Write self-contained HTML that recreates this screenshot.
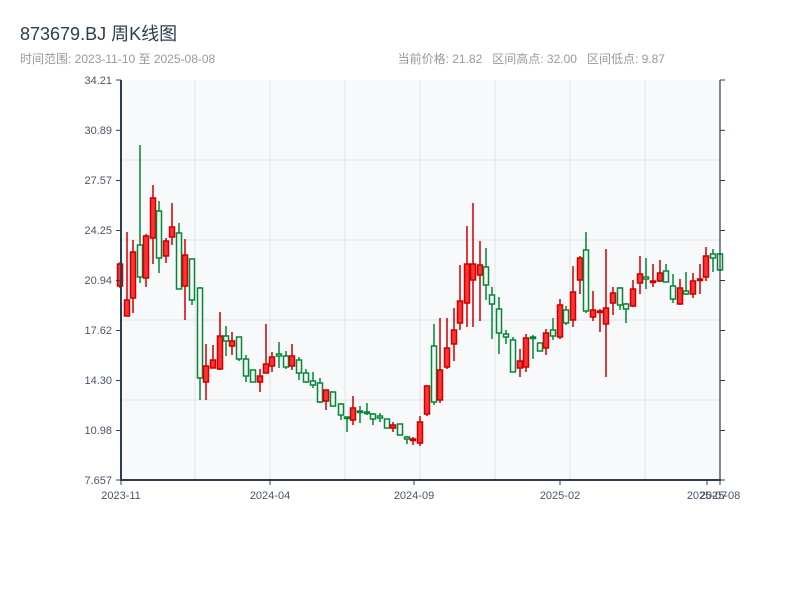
<!DOCTYPE html>
<html><head><meta charset="utf-8"><style>
html,body{margin:0;padding:0;background:#fff;width:800px;height:600px;overflow:hidden}
svg{display:block}
text{font-family:"Liberation Sans","Noto Sans CJK SC",sans-serif}
</style></head><body>
<svg width="800" height="600" viewBox="0 0 800 600" xmlns="http://www.w3.org/2000/svg">
<text x="20" y="40" font-size="18" fill="#2c3e50">873679.BJ 周K线图</text>
<text x="20" y="63" font-size="12" fill="#999">时间范围: 2023-11-10 至 2025-08-08</text>
<text x="665" y="63" font-size="12" fill="#999" text-anchor="end" style="white-space:pre">当前价格: 21.82   区间高点: 32.00   区间低点: 9.87</text>
<rect x="121" y="80" width="599" height="400" fill="#f7f9fb"/>
<g stroke="#e1e4ea" stroke-width="1">
<line x1="195" y1="80" x2="195" y2="480"/><line x1="270" y1="80" x2="270" y2="480"/><line x1="345" y1="80" x2="345" y2="480"/><line x1="420" y1="80" x2="420" y2="480"/><line x1="495" y1="80" x2="495" y2="480"/><line x1="570" y1="80" x2="570" y2="480"/><line x1="645" y1="80" x2="645" y2="480"/>
<line x1="121" y1="160" x2="720" y2="160"/><line x1="121" y1="240" x2="720" y2="240"/><line x1="121" y1="320" x2="720" y2="320"/><line x1="121" y1="400" x2="720" y2="400"/>
</g>
<g id="c" stroke-width="1.5"></g>
<g stroke="#2c3e50">
<line x1="121" y1="80" x2="121" y2="481" stroke-width="2"/>
<line x1="120" y1="480" x2="721" y2="480" stroke-width="2"/>
<line x1="720" y1="80" x2="720" y2="480" stroke-width="1.2"/>
<g stroke-width="1">
<line x1="116" y1="80" x2="121" y2="80"/><line x1="116" y1="130.3" x2="121" y2="130.3"/><line x1="116" y1="180.5" x2="121" y2="180.5"/><line x1="116" y1="230.5" x2="121" y2="230.5"/><line x1="116" y1="280.5" x2="121" y2="280.5"/><line x1="116" y1="330.5" x2="121" y2="330.5"/><line x1="116" y1="380.5" x2="121" y2="380.5"/><line x1="116" y1="430.5" x2="121" y2="430.5"/><line x1="116" y1="480" x2="121" y2="480"/>
<line x1="720" y1="80" x2="725" y2="80"/><line x1="720" y1="130.3" x2="725" y2="130.3"/><line x1="720" y1="180.5" x2="725" y2="180.5"/><line x1="720" y1="230.5" x2="725" y2="230.5"/><line x1="720" y1="280.5" x2="725" y2="280.5"/><line x1="720" y1="330.5" x2="725" y2="330.5"/><line x1="720" y1="380.5" x2="725" y2="380.5"/><line x1="720" y1="430.5" x2="725" y2="430.5"/><line x1="720" y1="480" x2="725" y2="480"/>
<line x1="121" y1="480" x2="121" y2="485"/><line x1="270" y1="480" x2="270" y2="485"/><line x1="414" y1="480" x2="414" y2="485"/><line x1="560" y1="480" x2="560" y2="485"/><line x1="707" y1="480" x2="707" y2="485"/><line x1="720" y1="480" x2="720" y2="485"/>
</g></g>
<g font-size="11" fill="#4a5568" text-anchor="end">
<text x="112" y="84">34.21</text><text x="112" y="134">30.89</text><text x="112" y="184">27.57</text><text x="112" y="234">24.25</text><text x="112" y="284">20.94</text><text x="112" y="334">17.62</text><text x="112" y="384">14.30</text><text x="112" y="434">10.98</text><text x="112" y="484">7.657</text>
</g>
<g font-size="11" fill="#4a5568" text-anchor="middle">
<text x="121" y="499">2023-11</text><text x="270" y="499">2024-04</text><text x="414" y="499">2024-09</text><text x="560" y="499">2025-02</text><text x="707" y="499">2025-07</text><text x="720" y="499">2025-08</text>
</g>
</svg>
<script>
var d=[[120,1,262,288,264,286],[127,1,232,316,300,316],[133,1,240,313,252,298],[140,0,145,283,245,277],[146,1,234,287,236,278],[153,1,185,264,198,238],[159,0,201,273,211,258],[166,1,238,263,241,256],[172,1,203,245,227,237],[179,0,223,289,233,289],[185,1,239,320,255,286],[192,0,259,305,259,300],[200,0,287,400,288,378],[206,1,344,400,366,382],[213,1,345,368,360,368],[220,1,312,370,336,369],[226,0,326,356,336,341],[232,1,332,355,341,346],[239,0,337,361,337,359],[246,0,355,382,359,376],[253,0,370,382,370,382],[260,1,369,392,376,382],[266,1,324,373,364,373],[272,1,352,372,357,366],[279,0,342,368,354,356],[286,0,351,369,356,367],[292,1,344,370,356,366],[299,0,357,380,360,373],[306,0,369,383,373,382],[313,0,372,388,381,385],[320,0,378,403,383,402],[326,1,390,410,390,401],[333,0,392,406,392,406],[341,0,403,420,404,415],[347,0,417,432,417,418],[353,1,396,425,408,420],[360,0,406,423,411,412],[367,0,403,415,412,413],[373,0,413,425,414,419],[380,0,413,422,416,418],[387,0,419,428,419,428],[393,1,422,432,425,428],[400,0,424,435,424,435],[407,0,436,444,437,439],[413,1,437,445,439,440],[420,1,416,446,422,443],[427,1,385,416,386,414],[434,0,324,405,346,402],[440,1,318,403,370,400],[447,1,318,369,348,367],[454,1,308,361,330,344],[460,1,265,330,301,323],[467,1,226,327,264,303],[473,1,203,327,264,280],[480,1,241,321,265,275],[486,0,248,300,267,285],[492,0,287,339,295,304],[499,0,297,354,309,333],[506,0,330,344,334,337],[513,0,337,372,340,372],[520,1,349,377,361,368],[526,1,334,372,338,367],[533,0,335,359,337,338],[540,0,343,351,343,351],[546,1,329,355,333,348],[553,0,318,340,330,336],[560,1,299,339,305,337],[566,0,306,325,310,323],[573,1,266,327,292,320],[580,1,256,294,258,280],[586,0,232,313,250,311],[593,1,291,321,310,317],[600,1,309,332,311,312],[606,1,249,377,308,324],[613,1,287,315,293,303],[620,0,287,310,288,305],[626,0,303,323,304,309],[633,1,280,307,289,306],[640,1,256,294,274,283],[646,0,258,289,277,279],[653,1,264,287,281,282],[660,1,260,282,273,281],[666,0,264,282,271,282],[673,0,274,303,286,299],[680,1,279,305,288,304],[686,0,272,295,291,294],[693,1,273,298,281,294],[700,1,264,294,279,280],[706,1,247,281,256,277],[713,0,249,272,254,258],[720,0,253,270,254,270]];
var g=document.getElementById('c'),s='';
d.forEach(function(a){var st=a[1]?'#cc0000':'#008833',f=a[1]?'#ff3333':'#f7f9fb',h=Math.max(a[5]-a[4],1.5);
s+='<line x1="'+a[0]+'" x2="'+a[0]+'" y1="'+a[2]+'" y2="'+a[3]+'" stroke="'+st+'"/>';
s+='<rect x="'+(a[0]-2.5)+'" y="'+a[4]+'" width="5" height="'+h+'" fill="'+f+'" stroke="'+st+'"/>';});
g.innerHTML=s;
</script>
</body></html>
